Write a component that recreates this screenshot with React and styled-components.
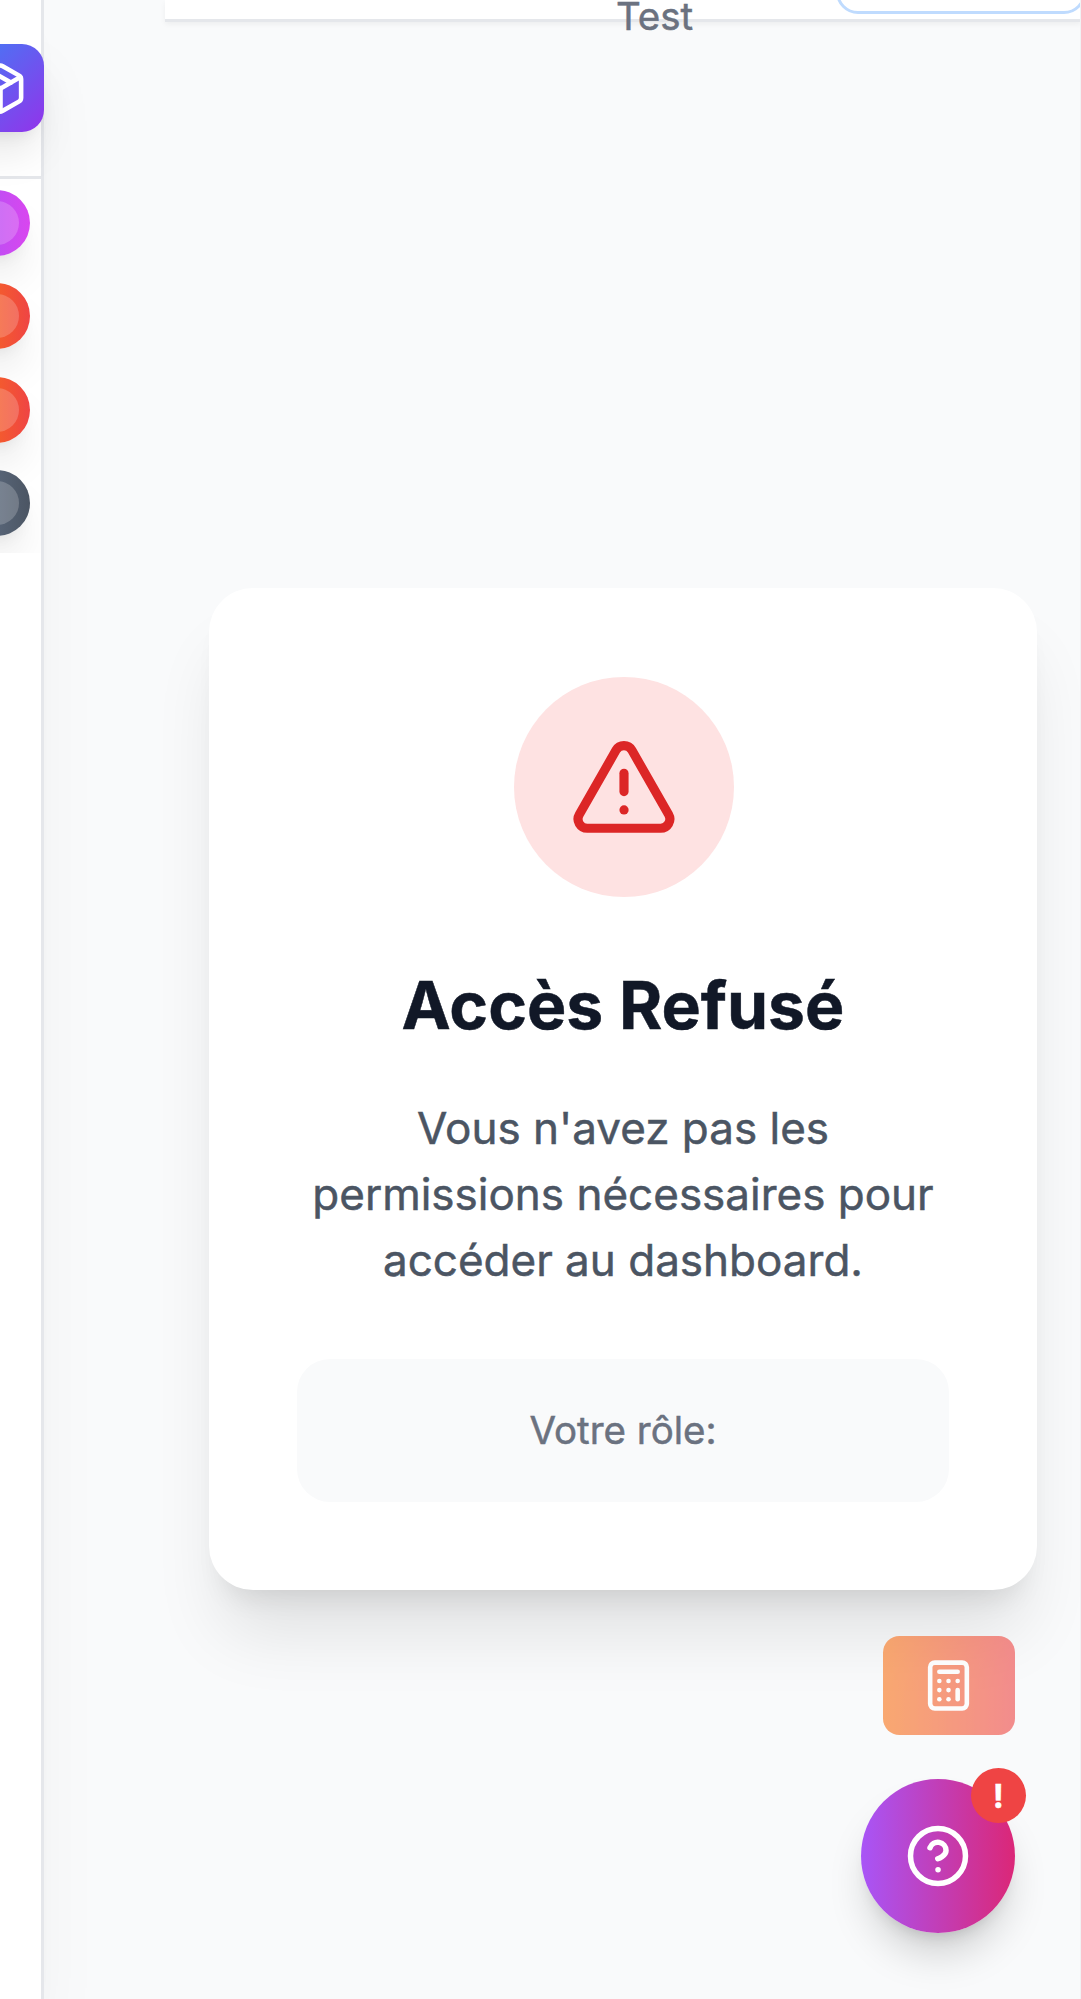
import React from "react";
import styled, { createGlobalStyle } from "styled-components";
import { Package, TriangleAlert, Calculator } from "lucide-react";

const GlobalStyle = createGlobalStyle`
  *, *::before, *::after { box-sizing: border-box; }
  body {
    margin: 0;
    overflow: hidden;
    background: #f9fafb;
    font-family: Inter, "Liberation Sans", sans-serif;
    -webkit-text-stroke: 0.5px currentColor;
  }
  h1, p { margin: 0; }
`;

const Page = styled.div`
  position: relative;
  display: flex;
  width: 1081px;
  height: 1999px;
  overflow: hidden;
  background: #f9fafb;
  border-right: 1px solid #f1f2f4;
`;

const Sidebar = styled.aside`
  flex: none;
  width: 44px;
  height: 1999px;
  background: #fff;
  border-right: 3px solid #e5e7eb;
  box-shadow: 0 55px 68.75px -13.75px rgba(0, 0, 0, 0.1),
    0 22px 27.5px -16.5px rgba(0, 0, 0, 0.1);
`;

const SidebarHeader = styled.div`
  display: flex;
  height: 179px;
  padding-top: 44px;
  border-bottom: 3px solid #e5e7eb;
`;

const LogoTile = styled.div`
  position: relative;
  z-index: 1;
  flex: none;
  display: flex;
  align-items: center;
  justify-content: center;
  width: 88px;
  height: 88px;
  margin-left: -44px;
  border-radius: 22px;
  color: #fff;
  background: linear-gradient(135deg, #3b82f6, #9333ea);
  box-shadow: 0 27.5px 41.25px -8.25px rgba(0, 0, 0, 0.1),
    0 11px 16.5px -11px rgba(0, 0, 0, 0.1);
`;

const Shortcuts = styled.nav`
  display: flex;
  flex-direction: column;
  gap: 27.5px;
  height: 374px;
  padding-top: 10.75px;
  overflow: hidden;
`;

const Shortcut = styled.div`
  flex: none;
  display: flex;
  align-items: center;
  justify-content: center;
  width: 66px;
  height: 66px;
  margin-left: -36px;
  border-radius: 50%;
  background: linear-gradient(90deg, ${(p) => p.$from}, ${(p) => p.$to});
  box-shadow: 0 27.5px 41.25px -8.25px rgba(0, 0, 0, 0.1),
    0 11px 16.5px -11px rgba(0, 0, 0, 0.1);
`;

const ShortcutDot = styled.span`
  width: 44px;
  height: 44px;
  border-radius: 50%;
  background: rgba(255, 255, 255, 0.2);
`;

const Content = styled.div`
  flex: none;
  display: flex;
  flex-direction: column;
  width: 916px;
  height: 1999px;
  margin-left: 121px;
`;

const TopBar = styled.header`
  display: flex;
  flex: none;
  height: 22px;
  background: #fff;
  border-bottom: 3px solid #e5e7eb;
  box-shadow: 0 2.75px 5.5px rgba(0, 0, 0, 0.05);
`;

const TopBarLabel = styled.p`
  margin-left: 451px;
  width: 78px;
  height: 33px;
  font-size: 38.5px;
  line-height: 33px;
  white-space: nowrap;
  color: #6b7280;
`;

const TopBarAction = styled.div`
  flex: none;
  width: 250px;
  height: 88px;
  margin: -74.25px 0 0 143px;
  border: 3px solid #bfdbfe;
  border-radius: 22px;
`;

const Main = styled.main`
  padding: 566px 44px 0;
`;

const Card = styled.section`
  display: flex;
  flex-direction: column;
  align-items: center;
  padding: 88.75px 88px 88px;
  border-radius: 44px;
  background: #fff;
  text-align: center;
  box-shadow: 0 55px 68.75px -13.75px rgba(0, 0, 0, 0.1),
    0 22px 27.5px -16.5px rgba(0, 0, 0, 0.1);
`;

const AlertCircle = styled.div`
  display: flex;
  align-items: center;
  justify-content: center;
  width: 220px;
  height: 220px;
  margin: 0 0 66px 2.5px;
  border-radius: 50%;
  color: #dc2626;
  background: #fee2e2;
`;

const Title = styled.h1`
  margin-bottom: 48px;
  font-size: 66px;
  line-height: 84px;
  font-weight: 700;
  color: #111827;
`;

const Message = styled.p`
  margin-bottom: 66px;
  font-size: 44px;
  line-height: 66px;
  color: #4b5563;
`;

const RoleBox = styled.div`
  width: 100%;
  padding: 44px;
  border-radius: 33px;
  background: #f9fafb;
  font-size: 38.5px;
  line-height: 55px;
  color: #6b7280;
`;

const FloatingActions = styled.div`
  position: absolute;
  right: 65.25px;
  bottom: 66px;
  display: flex;
  flex-direction: column;
  align-items: flex-end;
  gap: 44px;
`;

const CalculatorButton = styled.button`
  display: flex;
  align-items: center;
  justify-content: center;
  width: 132px;
  height: 99px;
  padding: 0;
  border: 0;
  border-radius: 16.5px;
  color: #fff;
  background: linear-gradient(90deg, #f97316, #ef4444);
  opacity: 0.6;
`;

const HelpButton = styled.button`
  position: relative;
  display: flex;
  align-items: center;
  justify-content: center;
  width: 154px;
  height: 154px;
  padding: 0;
  border: 0;
  border-radius: 50%;
  color: #fff;
  font-family: inherit;
  background: linear-gradient(90deg, #a855f7, #db2777);
  box-shadow: 0 27.5px 41.25px -8.25px rgba(0, 0, 0, 0.18),
    0 11px 16.5px -11px rgba(0, 0, 0, 0.18);
`;

const Badge = styled.span`
  position: absolute;
  top: -11px;
  right: -11px;
  display: flex;
  align-items: center;
  justify-content: center;
  width: 55px;
  height: 55px;
  border-radius: 50%;
  font-size: 33px;
  line-height: 44px;
  font-weight: 700;
  -webkit-text-stroke: 0.4px currentColor;
  background: #ef4444;
`;

const shortcuts = [
  { id: "a", from: "#a855f7", to: "#d946ef" },
  { id: "b", from: "#f97316", to: "#ef4444" },
  { id: "c", from: "#f97316", to: "#ef4444" },
  { id: "d", from: "#64748b", to: "#4b5563" },
];

function HelpIcon() {
  return (
    <svg width="66" height="66" viewBox="0 0 24 24" fill="none" stroke="currentColor" strokeWidth="2" strokeLinecap="round" strokeLinejoin="round">
      <circle cx="12" cy="12" r="10" />
      <path d="M9.09 9a3 3 0 0 1 5.83 1c0 2-3 3-3 3" />
      <path d="M12 17h.01" />
    </svg>
  );
}

export default function App() {
  return (
    <>
      <GlobalStyle />
      <Page>
        <Sidebar>
          <SidebarHeader>
            <LogoTile>
              <Package size={55} />
            </LogoTile>
          </SidebarHeader>
          <Shortcuts>
            {shortcuts.map((s) => (
              <Shortcut key={s.id} $from={s.from} $to={s.to}>
                <ShortcutDot />
              </Shortcut>
            ))}
          </Shortcuts>
        </Sidebar>
        <Content>
          <TopBar>
            <TopBarLabel>Test</TopBarLabel>
            <TopBarAction />
          </TopBar>
          <Main>
            <Card>
              <AlertCircle>
                <TriangleAlert size={110} />
              </AlertCircle>
              <Title>Accès Refusé</Title>
              <Message>
                Vous n'avez pas les permissions nécessaires pour accéder au dashboard.
              </Message>
              <RoleBox>Votre rôle:</RoleBox>
            </Card>
          </Main>
        </Content>
        <FloatingActions>
          <CalculatorButton>
            <Calculator size={55} />
          </CalculatorButton>
          <HelpButton>
            <HelpIcon />
            <Badge>!</Badge>
          </HelpButton>
        </FloatingActions>
      </Page>
    </>
  );
}
